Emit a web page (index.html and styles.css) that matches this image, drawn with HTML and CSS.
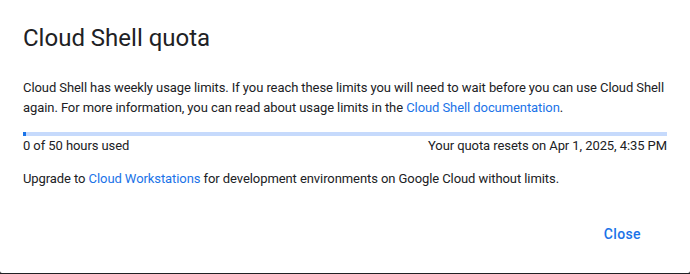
FILE: index.html
```html
<!DOCTYPE html>
<html>
<head>
<meta charset="utf-8">
<link rel="stylesheet" href="styles.css">
</head>
<body>
<div class="dialog">
  <h1 class="title">Cloud Shell quota</h1>
  <p class="text intro">Cloud Shell has weekly usage limits. If you reach these limits you will need to wait before you can use Cloud Shell again. For more information, you can read about usage limits in the <a class="link" href="#">Cloud Shell documentation</a>.</p>
  <div class="progress"><div class="progress-fill" style="width:3px"></div></div>
  <div class="usage">
    <span>0 of 50 hours used</span>
    <span>Your quota resets on Apr 1, 2025, 4:35 PM</span>
  </div>
  <p class="text upgrade">Upgrade to <a class="link" href="#">Cloud Workstations</a> for development environments on Google Cloud without limits.</p>
  <div class="actions">
    <button class="btn">Close</button>
  </div>
</div>
</body>
</html>
```
FILE: styles.css
```css
html, body {
  margin: 0;
  padding: 0;
  background: #202124;
}
body {
  width: 690px;
  height: 274px;
  overflow: hidden;
}
.dialog {
  box-sizing: border-box;
  width: 690px;
  height: 273px;
  background: #fff;
  border-radius: 0 0 2px 2px;
  padding: 22px 23px 0 23px;
  font-family: Roboto, "Liberation Sans", sans-serif;
  color: #202124;
  display: flex;
  flex-direction: column;
}
.title {
  margin: 0;
  font-size: 24px;
  line-height: 32px;
  font-weight: 400;
}
.text {
  margin: 0;
  font-size: 13px;
  line-height: 20px;
  letter-spacing: -0.08px;
}
.intro {
  margin-top: 24px;
}
.link {
  color: #1a73e8;
  text-decoration: none;
}
.progress {
  margin-top: 14px;
  width: 644px;
  height: 4px;
  background: #c6dafc;
  display: flex;
}
.progress-fill {
  background: #1a73e8;
  height: 100%;
}
.usage {
  width: 644px;
  display: flex;
  justify-content: space-between;
  font-size: 13px;
  line-height: 20px;
  letter-spacing: -0.08px;
}
.upgrade {
  margin-top: 13px;
}
.actions {
  margin-top: auto;
  margin-bottom: 29px;
  display: flex;
  justify-content: flex-end;
  padding-right: 26px;
}
.btn {
  border: none;
  background: none;
  font-family: Roboto, "Liberation Sans", sans-serif;
  font-size: 14px;
  font-weight: 500;
  letter-spacing: 0.4px;
  color: #1a73e8;
  padding: 0;
  line-height: 20px;
  cursor: pointer;
}
```
